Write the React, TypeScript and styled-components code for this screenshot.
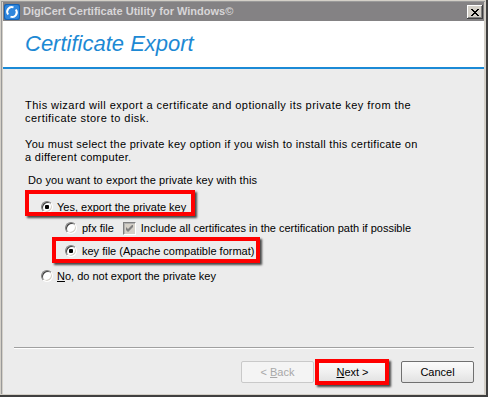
import React from "react";
import styled, { createGlobalStyle } from "styled-components";

const Global = createGlobalStyle`
  html, body { margin: 0; padding: 0; background: #d4d0c8; }
  #root { width: 488px; height: 397px; }
  * { box-sizing: border-box; }
`;

const UI_FONT = `"Liberation Sans", Arial, sans-serif`;

const Window = styled.div`
  width: 488px;
  height: 397px;
  display: flex;
  flex-direction: column;
  padding: 2px 4px 3px 3px;
  background: #d4d0c8;
  box-shadow: inset -2px -2px 0 #404040, inset -3px -3px 0 #d4d0c8,
    inset 1px 1px 0 #d4d0c8, inset 2px 2px 0 #9a9a9a;
  font-family: ${UI_FONT};
  font-size: 11px;
  color: #000;
`;

const TitleBar = styled.div`
  height: 19px;
  flex: none;
  display: flex;
  align-items: center;
  padding: 0 1px 0 1px;
  background: #848284;
`;

const TitleText = styled.span`
  margin-left: 3px;
  font-weight: bold;
  font-size: 11px;
  line-height: 13px;
  color: #d8d6d8;
  white-space: nowrap;
`;

const CloseButton = styled.div`
  margin-left: auto;
  width: 16px;
  height: 14px;
  margin-top: 1px;
  display: flex;
  align-items: center;
  justify-content: center;
  background: #d4d0c8;
  box-shadow: inset -1px -1px 0 #404040, inset 1px 1px 0 #ffffff,
    inset -2px -2px 0 #808080;
`;

const Header = styled.div`
  height: 48px;
  flex: none;
  padding: 12px 0 0 22px;
  background: #ffffff;
  border-bottom: 2px solid #1b8ad6;
`;

const Heading = styled.h1`
  margin: 0;
  font-family: ${UI_FONT};
  font-style: italic;
  font-weight: normal;
  font-size: 22px;
  line-height: 22px;
  color: #1d89d4;
`;

const Body = styled.div`
  flex: 1;
  display: flex;
  flex-direction: column;
  background: #ececec;
`;

const Content = styled.div`
  padding: 30px 0 0 22px;
`;

const Para = styled.p<{ $mt?: number; $spacing?: number; $indent?: number }>`
  margin: ${(p) => p.$mt ?? 0}px 0 0 0;
  padding-left: ${(p) => p.$indent ?? 0}px;
  line-height: 13px;
  letter-spacing: ${(p) => p.$spacing ?? 0}px;
  white-space: pre-line;
`;

const Row = styled.div<{ $mt: number; $indent: number }>`
  position: relative;
  display: flex;
  align-items: center;
  height: 16px;
  margin-top: ${(p) => p.$mt}px;
  padding-left: ${(p) => p.$indent}px;
  line-height: 16px;
  white-space: nowrap;
`;

const Radio = styled.span<{ $checked?: boolean }>`
  position: relative;
  flex: none;
  width: 12px;
  height: 12px;
  border-radius: 50%;
  background: #ffffff;
  border: 1px solid;
  border-color: #808080 #ffffff #ffffff #808080;
  box-shadow: inset 1px 1px 0 #404040, inset -1px -1px 0 #d4d0c8;
  &::after {
    content: "";
    display: ${(p) => (p.$checked ? "block" : "none")};
    position: absolute;
    left: 3px;
    top: 3px;
    width: 4px;
    height: 4px;
    border-radius: 1px;
    background: #000;
  }
`;

const Label = styled.span<{ $gap?: number }>`
  margin-left: ${(p) => p.$gap ?? 4}px;
`;

const Underline = styled.span`
  text-decoration: underline;
`;

const CheckBox = styled.span`
  flex: none;
  width: 13px;
  height: 13px;
  margin-left: 9px;
  display: flex;
  align-items: center;
  justify-content: center;
  background: #d4d0c8;
  border: 1px solid;
  border-color: #808080 #ffffff #ffffff #808080;
  box-shadow: inset 1px 1px 0 #b0b0b0;
`;

const Highlight = styled.span<{ $top: number; $left: number; $w: number; $h: number }>`
  position: absolute;
  top: ${(p) => p.$top}px;
  left: ${(p) => p.$left}px;
  width: ${(p) => p.$w}px;
  height: ${(p) => p.$h}px;
  border: 4px solid #ff0000;
  box-shadow: 2px 2px 2px rgba(0, 0, 0, 0.7);
  pointer-events: none;
`;

const Footer = styled.div`
  margin-top: auto;
  padding: 0 10px 11px 11px;
`;

const Separator = styled.div`
  height: 2px;
  border-top: 1px solid #a0a0a0;
  border-bottom: 1px solid #ffffff;
`;

const ButtonRow = styled.div`
  margin-top: 12px;
  display: flex;
  justify-content: flex-end;
`;

const Button = styled.div<{ $disabled?: boolean; $gap?: number }>`
  position: relative;
  width: 73px;
  height: 22px;
  margin-left: ${(p) => p.$gap ?? 0}px;
  display: flex;
  align-items: center;
  justify-content: center;
  border: 1px solid ${(p) => (p.$disabled ? "#c9c9c9" : "#707070")};
  border-radius: 2px;
  background: ${(p) =>
    p.$disabled
      ? "#f4f4f4"
      : "linear-gradient(#fbfbfb 0%, #f0f0f0 50%, #e2e2e2 100%)"};
  color: ${(p) => (p.$disabled ? "#a8a8a8" : "#000")};
  font-size: 11px;
`;

const ButtonLabel = styled.span`
  white-space: pre;
`;

const Logo = () => (
  <svg width="16" height="16" viewBox="0 0 16 16">
    <rect x="0" y="0" width="16" height="16" rx="2" fill="#1363b8" />
    <rect x="1" y="1" width="14" height="14" rx="2" fill="#2f86dc" />
    <path
      d="M4.2 10.5 A4.6 4.6 0 0 1 9.5 3.4"
      stroke="#fff"
      strokeWidth="2"
      fill="none"
    />
    <path
      d="M11.8 5.5 A4.6 4.6 0 0 1 6.5 12.6"
      stroke="#fff"
      strokeWidth="2"
      fill="none"
    />
  </svg>
);

const CloseGlyph = () => (
  <svg width="8" height="7" viewBox="0 0 8 7">
    <path
      d="M0 0h2v1h1v1h2V1h1V0h2v1H7v1H6v1H5v1h1v1h1v1h1v1H6V6H5V5H3v1H2v1H0V6h1V5h1V4h1V3H2V2H1V1H0z"
      fill="#000"
    />
  </svg>
);

const CheckGlyph = () => (
  <svg width="7" height="7" viewBox="0 0 7 7">
    <path d="M0 2v3l2 2 5-5V-1L2 4z" fill="#808080" />
  </svg>
);

export default function App() {
  return (
    <>
      <Global />
      <Window>
        <TitleBar>
          <Logo />
          <TitleText>DigiCert Certificate Utility for Windows©</TitleText>
          <CloseButton>
            <CloseGlyph />
          </CloseButton>
        </TitleBar>
        <Header>
          <Heading>Certificate Export</Heading>
        </Header>
        <Body>
          <Content>
            <Para $spacing={0.45}>
              {"This wizard will export a certificate and optionally its private key from the\ncertificate store to disk."}
            </Para>
            <Para $mt={13} $spacing={0.3}>
              {"You must select the private key option if you wish to install this certificate on\na different computer."}
            </Para>
            <Para $mt={10} $indent={3} $spacing={0.1}>
              Do you want to export the private key with this
            </Para>
            <Row $mt={12} $indent={16}>
              <Radio $checked />
              <Label>
                <Underline>Y</Underline>es, export the private key
              </Label>
              <Highlight $top={-9} $left={0} $w={170} $h={26} />
            </Row>
            <Row $mt={5} $indent={40}>
              <Radio />
              <Label $gap={5}>pfx file</Label>
              <CheckBox>
                <CheckGlyph />
              </CheckBox>
              <Label $gap={5}>
                Include all certificates in the certification path if possible
              </Label>
            </Row>
            <Row $mt={7} $indent={40}>
              <Radio $checked />
              <Label $gap={5}>key file (Apache compatible format)</Label>
              <Highlight $top={-6} $left={27} $w={208} $h={26} />
            </Row>
            <Row $mt={9} $indent={16}>
              <Radio />
              <Label>
                <Underline>N</Underline>o, do not export the private key
              </Label>
            </Row>
          </Content>
          <Footer>
            <Separator />
            <ButtonRow>
              <Button $disabled>
                <ButtonLabel>
                  {"< "}
                  <Underline>B</Underline>
                  {"ack"}
                </ButtonLabel>
              </Button>
              <Button $gap={2}>
                <ButtonLabel>
                  <Underline>N</Underline>
                  {"ext >"}
                </ButtonLabel>
                <Highlight $top={-3} $left={-2} $w={74} $h={26} />
              </Button>
              <Button $gap={12}>
                <ButtonLabel>Cancel</ButtonLabel>
              </Button>
            </ButtonRow>
          </Footer>
        </Body>
      </Window>
    </>
  );
}
